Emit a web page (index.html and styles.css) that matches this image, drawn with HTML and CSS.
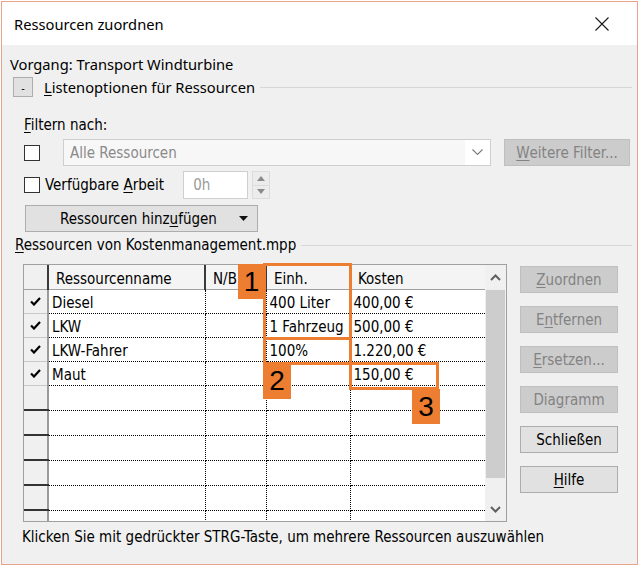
FILE: index.html
```html
<!DOCTYPE html>
<html lang="de">
<head>
<meta charset="utf-8">
<title>Ressourcen zuordnen</title>
<link rel="stylesheet" href="styles.css">
</head>
<body>
<div class="window">
  <div class="titlebar">
    <span class="title">Ressourcen zuordnen</span>
    <svg class="close" width="14" height="14" viewBox="0 0 14 14"><path d="M0.5 0.5 L13.5 13.5 M13.5 0.5 L0.5 13.5" stroke="#1a1a1a" stroke-width="1.1" fill="none"/></svg>
  </div>
  <div class="content">
    <div class="task">Vorgang: Transport Windturbine</div>
    <div class="listopt">
      <span class="collapse">-</span>
      <span class="lo-label"><u>L</u>istenoptionen für Ressourcen</span>
      <span class="rule"></span>
    </div>
    <div class="filter-label"><u>F</u>iltern nach:</div>
    <div class="filter-row">
      <span class="cb"></span>
      <div class="select">
        <span class="sel-text">Alle Ressourcen</span>
        <span class="sel-arrow"><svg width="11" height="7" viewBox="0 0 11 7"><path d="M0.5 0.5 L5.5 5.5 L10.5 0.5" stroke="#7a7a7a" stroke-width="1.1" fill="none"/></svg></span>
      </div>
      <div class="btn disabled more"><u>W</u>eitere Filter...</div>
    </div>
    <div class="avail-row">
      <span class="cb"></span>
      <span class="avail-label">Verfügbare <u>A</u>rbeit</span>
      <div class="spin-input">0h</div>
      <div class="spin">
        <span class="spin-up"><svg width="8" height="5" viewBox="0 0 8 5"><path d="M0 5 L4 0 L8 5 Z" fill="#8a8a8a"/></svg></span>
        <span class="spin-down"><svg width="8" height="5" viewBox="0 0 8 5"><path d="M0 0 L4 5 L8 0 Z" fill="#8a8a8a"/></svg></span>
      </div>
    </div>
    <div class="add-row">
      <div class="btn add"><span class="add-text">Ressourcen hinz<u>u</u>fügen</span><svg class="add-arrow" width="9" height="5" viewBox="0 0 9 5"><path d="M0 0 L9 0 L4.5 5 Z" fill="#111"/></svg></div>
    </div>
    <div class="section">
      <span class="sec-label"><u>R</u>essourcen von Kostenmanagement.mpp</span>
      <span class="rule"></span>
    </div>
    <div class="main">
      <div class="grid-wrap">
        <div class="grid">
          <table class="res">
            <colgroup><col class="c-sel"><col class="c-name"><col class="c-nb"><col class="c-unit"><col class="c-cost"></colgroup>
            <thead>
              <tr><th class="sel"></th><th>Ressourcenname</th><th>N/B</th><th>Einh.</th><th class="last">Kosten</th></tr>
            </thead>
            <tbody>
              <tr><td class="sel chk"><svg width="11" height="9" viewBox="0 0 11 9"><path d="M1 4.5 L4 7.5 L10 1" stroke="#000" stroke-width="2.2" fill="none"/></svg></td><td>Diesel</td><td></td><td>400 Liter</td><td class="last">400,00 €</td></tr>
              <tr><td class="sel chk"><svg width="11" height="9" viewBox="0 0 11 9"><path d="M1 4.5 L4 7.5 L10 1" stroke="#000" stroke-width="2.2" fill="none"/></svg></td><td>LKW</td><td></td><td>1 Fahrzeug</td><td class="last">500,00 €</td></tr>
              <tr><td class="sel chk"><svg width="11" height="9" viewBox="0 0 11 9"><path d="M1 4.5 L4 7.5 L10 1" stroke="#000" stroke-width="2.2" fill="none"/></svg></td><td>LKW-Fahrer</td><td></td><td>100%</td><td class="last">1.220,00 €</td></tr>
              <tr><td class="sel chk"><svg width="11" height="9" viewBox="0 0 11 9"><path d="M1 4.5 L4 7.5 L10 1" stroke="#000" stroke-width="2.2" fill="none"/></svg></td><td>Maut</td><td></td><td></td><td class="last">150,00 €</td></tr>
              <tr><td class="sel empty"></td><td></td><td></td><td></td><td class="last"></td></tr>
              <tr><td class="sel empty"></td><td></td><td></td><td></td><td class="last"></td></tr>
              <tr><td class="sel empty"></td><td></td><td></td><td></td><td class="last"></td></tr>
              <tr><td class="sel empty"></td><td></td><td></td><td></td><td class="last"></td></tr>
              <tr><td class="sel empty"></td><td></td><td></td><td></td><td class="last"></td></tr>
              <tr><td class="sel empty"></td><td></td><td></td><td></td><td class="last"></td></tr>
            </tbody>
          </table>
        </div>
        <div class="scrollbar">
          <span class="sb-arrow"><svg width="11" height="7" viewBox="0 0 11 7"><path d="M1 6 L5.5 1.5 L10 6" stroke="#606060" stroke-width="2" fill="none"/></svg></span>
          <span class="sb-thumb"></span>
          <span class="sb-arrow down"><svg width="11" height="7" viewBox="0 0 11 7"><path d="M1 1 L5.5 5.5 L10 1" stroke="#606060" stroke-width="2" fill="none"/></svg></span>
        </div>
        <span class="mark box1"></span>
        <span class="mark box2"></span>
        <span class="mark box3"></span>
        <span class="badge b1">1</span>
        <span class="badge b2">2</span>
        <span class="badge b3">3</span>
      </div>
      <div class="side">
        <div class="btn disabled"><u>Z</u>uordnen</div>
        <div class="btn disabled">E<u>n</u>tfernen</div>
        <div class="btn disabled"><u>E</u>rsetzen...</div>
        <div class="btn disabled">Dia<u>g</u>ramm</div>
        <div class="btn">Schließen</div>
        <div class="btn"><u>H</u>ilfe</div>
      </div>
    </div>
    <div class="hint">Klicken Sie mit gedrückter STRG-Taste, um mehrere Ressourcen auszuwählen</div>
  </div>
</div>
</body>
</html>
```

FILE: styles.css
```css
html, body {
  margin: 0;
  padding: 0;
  background: #ffffff;
}
body {
  padding: 1px 0 0 1px;
  font-family: "DejaVu Sans Condensed", "DejaVu Sans", sans-serif;
  font-size: 15px;
  color: #000;
}
u { text-decoration: underline; text-underline-offset: 2px; }

.window {
  width: 637px;
  height: 564px;
  box-sizing: border-box;
  border: 1px solid #e9a38b;
  background: #f0f0f0;
  display: flex;
  flex-direction: column;
}
.titlebar {
  height: 43px;
  flex: none;
  background: #fff;
  display: flex;
  align-items: center;
  padding-left: 12px;
}
.title {
  font-family: "Noto Sans", sans-serif;
  font-size: 14.7px;
  color: #000;
}
.close { margin-left: auto; margin-right: 28px; }

.content {
  display: flex;
  flex-direction: column;
  padding-top: 9px;
}
.task {
  height: 20px;
  line-height: 20px;
  margin-left: 8px;
  font-family: "Noto Sans", sans-serif;
  font-size: 14.7px;
}
.listopt {
  height: 20px;
  margin-top: 3px;
  margin-left: 11px;
  display: flex;
  align-items: center;
}
.collapse {
  width: 18px;
  border: 1px solid #adadad;
  background: #e1e1e1;
  display: flex;
  justify-content: center;
  align-items: center;
  font-size: 11px;
  line-height: 1;
  padding-top: 3px;
  box-sizing: content-box;
  height: 15px;
}
.lo-label {
  margin-left: 11px;
  font-family: "Noto Sans", sans-serif;
  font-size: 14.7px;
}
.rule {
  flex: 1;
  height: 1px;
  background: #d7d7d7;
  margin-left: 5px;
  margin-right: 5px;
}
.filter-label {
  height: 20px;
  line-height: 20px;
  margin-top: 18px;
  margin-left: 22px;
}
.filter-row {
  height: 27px;
  margin-top: 4px;
  margin-left: 22px;
  display: flex;
  align-items: center;
}
.cb {
  width: 14px;
  height: 14px;
  border: 1px solid #333;
  background: #fff;
  flex: none;
}
.select {
  margin-left: 23px;
  width: 428px;
  height: 27px;
  box-sizing: border-box;
  border: 1px solid #cfcfcf;
  background: #f7f7f7;
  display: flex;
  align-items: center;
}
.sel-text {
  padding-left: 6px;
  color: #8a8a8a;
  flex: 1;
}
.sel-arrow {
  width: 25px;
  height: 25px;
  background: #fff;
  display: flex;
  align-items: center;
  justify-content: center;
}
.btn {
  box-sizing: border-box;
  height: 27px;
  border: 1px solid #adadad;
  background: #e1e1e1;
  display: flex;
  align-items: center;
  justify-content: center;
  color: #000;
}
.btn.disabled {
  background: #cccccc;
  border-color: #bfbfbf;
  color: #838383;
}
.more {
  margin-left: 13px;
  width: 126px;
}
.avail-row {
  height: 28px;
  margin-top: 5px;
  margin-left: 22px;
  display: flex;
  align-items: center;
}
.avail-label { margin-left: 5px; }
.spin-input {
  width: 65px;
  height: 28px;
  box-sizing: border-box;
  border: 1px solid #cfcfcf;
  background: #fff;
  color: #9a9a9a;
  padding-left: 9px;
  line-height: 26px;
  margin-left: 19px;
}
.spin {
  margin-left: 4px;
  width: 18px;
  height: 28px;
  display: flex;
  flex-direction: column;
}
.spin span {
  flex: 1;
  display: flex;
  align-items: center;
  justify-content: center;
  background: #ececec;
  border: 1px solid #dcdcdc;
}
.spin .spin-down { border-top: none; }
.add-row {
  height: 27px;
  margin-top: 6px;
  margin-left: 23px;
  display: flex;
}
.add {
  width: 233px;
  justify-content: flex-start;
}
.add-text { margin-left: 34px; }
.add-arrow { margin-left: auto; margin-right: 9px; }

.section {
  height: 20px;
  margin-top: 3px;
  margin-left: 13px;
  display: flex;
  align-items: center;
}
.main {
  margin-top: 9px;
  margin-left: 21px;
  display: flex;
  gap: 13px;
  height: 258px;
}
.grid-wrap {
  position: relative;
  width: 484px;
  height: 258px;
  box-sizing: border-box;
  border: 1px solid #a0a0a0;
  background: #fff;
  display: flex;
}
.grid {
  width: 461px;
  overflow: hidden;
}
.res {
  border-collapse: collapse;
  table-layout: fixed;
  width: 461px;
  font-size: 15px;
}
.c-sel { width: 24px; }
.c-name { width: 157px; }
.c-nb { width: 61px; }
.c-unit { width: 84px; }
.c-cost { width: 135px; }
.res th {
  height: 20px;
  padding: 4px 0 0 7px;
  line-height: 20px;
  text-align: left;
  font-weight: normal;
  background: #f4f4f4;
  border-right: 2px solid #3a3a3a;
  border-bottom: 1px solid #a0a0a0;
  white-space: nowrap;
  overflow: hidden;
}
.res th.last { border-right: none; }
.res th.sel { background: #f0f0f0; padding: 4px 0 0 0; }
.res td {
  height: 19px;
  line-height: 19px;
  padding: 4px 0 0 3px;
  border-right: 1px dotted #000;
  border-bottom: 1px dotted #000;
  white-space: nowrap;
  overflow: hidden;
}
.res td.last { border-right: none; }
.res td.sel {
  padding: 2px 0 2px 0;
  background: #f0f0f0;
  border-right: 2px solid #9a9a9a;
  text-align: center;
}
.res td.chk { border-bottom: 1px solid #c8c8c8; }
.res td.empty { border-bottom: 2px solid #333; }
.res td.sel svg { display: block; margin: 0 auto; }

.scrollbar {
  width: 21px;
  background: #f0f0f0;
  display: flex;
  flex-direction: column;
  align-items: center;
}
.sb-arrow {
  height: 25px;
  display: flex;
  align-items: center;
  justify-content: center;
}
.sb-thumb {
  width: 19px;
  height: 188px;
  background: #cdcdcd;
}
.sb-arrow.down { margin-top: auto; height: 24px; }

.mark {
  position: absolute;
  box-sizing: border-box;
  border: 3px solid #ed7d31;
}
.box1 { left: 239px; top: -2px; width: 89px; height: 77px; }
.box2 { left: 239px; top: 72px; width: 89px; height: 28px; }
.box3 { left: 325px; top: 97px; width: 90px; height: 28px; }
.badge {
  position: absolute;
  background: #ed7d31;
  color: #000;
  font-family: "Liberation Sans", sans-serif;
  font-size: 28px;
  line-height: 35px;
  text-align: center;
  width: 28px;
  height: 35px;
}
.b1 { left: 214px; top: -1px; width: 27px; }
.b2 { left: 239px; top: 98px; height: 36px; }
.b3 { left: 388px; top: 124px; }

.side {
  width: 98px;
  display: flex;
  flex-direction: column;
  gap: 13px;
  padding-top: 2px;
}
.hint {
  height: 20px;
  line-height: 20px;
  margin-top: 5px;
  margin-left: 20px;
}
```
